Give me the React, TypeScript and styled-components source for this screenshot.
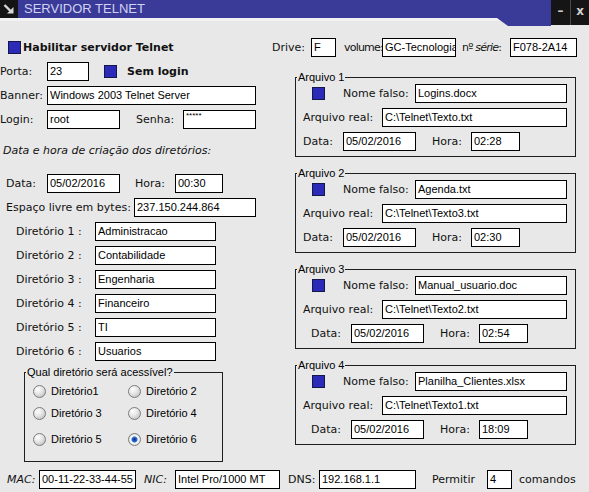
import styled, { createGlobalStyle } from 'styled-components';

const GlobalStyle = createGlobalStyle`
    body {
        margin: 0;
        background: #e8e8e8;
    }
`;

const files = [
    { n: 1, nome: 'Logins.docx', real: 'C:\\Telnet\\Texto.txt', hora: '02:28', shift: 0 },
    { n: 2, nome: 'Agenda.txt', real: 'C:\\Telnet\\Texto3.txt', hora: '02:30', shift: 0 },
    { n: 3, nome: 'Manual_usuario.doc', real: 'C:\\Telnet\\Texto2.txt', hora: '02:54', shift: 8 },
    { n: 4, nome: 'Planilha_Clientes.xlsx', real: 'C:\\Telnet\\Texto1.txt', hora: '18:09', shift: 8 },
];

const dirs = ['Administracao', 'Contabilidade', 'Engenharia', 'Financeiro', 'TI', 'Usuarios'];

const radios = ['Diretório1', 'Diretório 2', 'Diretório 3', 'Diretório 4', 'Diretório 5', 'Diretório 6'];

const App = () => {
    return (
        <Window>
            <GlobalStyle />
            <TitleBar>
                <SysBox>
                    <svg width="18" height="18" viewBox="0 0 18 18">
                        <path d="M4.5 5 L10.5 11" stroke="#d6d6d6" strokeWidth="2.4" />
                        <polygon points="13.5,7 13.5,13.5 7,13.5" fill="#d6d6d6" />
                    </svg>
                </SysBox>
                <Title>SERVIDOR TELNET</Title>
                <Notch />
                <WinButton>–</WinButton>
                <WinButton $sep>x</WinButton>
            </TitleBar>

            <Content>
                <Row $pl={8}>
                    <Check />
                    <Label $ml={2} $bold>Habilitar servidor Telnet</Label>
                    <Spacer />
                    <Label $w={39}>Drive:</Label>
                    <Field $w={25}>F</Field>
                    <Label $w={38} $ml={8} $tight>volume:</Label>
                    <Field $w={74}>GC-Tecnologia</Field>
                    <Label $w={48} $ml={6} $tight>nº <i>série</i>:</Label>
                    <Field $w={67}>F078-2A14</Field>
                    <Gap $w={12} />
                </Row>

                <Columns>
                    <LeftCol>
                        <Row>
                            <Label $w={47}>Porta:</Label>
                            <Field $w={42}>23</Field>
                            <Check $ml={15} />
                            <Label $ml={10} $bold>Sem login</Label>
                        </Row>
                        <Row $mt={5}>
                            <Label $w={47}>Banner:</Label>
                            <Field $w={209}>Windows 2003 Telnet Server</Field>
                        </Row>
                        <Row $mt={5}>
                            <Label $w={47}>Login:</Label>
                            <Field $w={73}>root</Field>
                            <Label $w={47} $ml={16}>Senha:</Label>
                            <Field $w={73} $mask>*****</Field>
                        </Row>

                        <Heading>Data e hora de criação dos diretórios:</Heading>

                        <Row $pl={6} $mt={15}>
                            <Label $w={41}>Data:</Label>
                            <Field $w={73}>05/02/2016</Field>
                            <Label $w={40} $ml={15}>Hora:</Label>
                            <Field $w={48}>00:30</Field>
                        </Row>
                        <Row $pl={6} $mt={5}>
                            <Label $w={128}>Espaço livre em bytes:</Label>
                            <Field $w={122}>237.150.244.864</Field>
                        </Row>
                        {dirs.map((d, i) => (
                            <Row key={d} $pl={16} $mt={5}>
                                <Label $w={79}>Diretório {i + 1} :</Label>
                                <Field $w={121}>{d}</Field>
                            </Row>
                        ))}

                        <DirGroup>
                            <Legend>Qual diretório será acessível?</Legend>
                            <RadioGrid>
                                {radios.map((r, i) => (
                                    <RadioItem key={r}>
                                        <RadioCircle $checked={i === 5} />
                                        {r}
                                    </RadioItem>
                                ))}
                            </RadioGrid>
                        </DirGroup>
                    </LeftCol>

                    <RightCol>
                        {files.map((f) => (
                            <FileGroup key={f.n} $mt={f.n === 1 ? 0 : 9}>
                                <Legend>Arquivo {f.n}</Legend>
                                <Row $pl={16}>
                                    <Check />
                                    <Label $w={72} $ml={18}>Nome falso:</Label>
                                    <Field $w={152}>{f.nome}</Field>
                                </Row>
                                <Row $pl={7} $mt={5}>
                                    <Label $w={79}>Arquivo real:</Label>
                                    <Field $w={185}>{f.real}</Field>
                                </Row>
                                <Row $pl={7 + f.shift} $mt={5}>
                                    <Label $w={40}>Data:</Label>
                                    <Field $w={73}>05/02/2016</Field>
                                    <Label $w={39} $ml={16}>Hora:</Label>
                                    <Field $w={49}>{f.hora}</Field>
                                </Row>
                            </FileGroup>
                        ))}
                    </RightCol>
                </Columns>

                <Row $pl={7} $mt={8}>
                    <Label $w={32} $italic>MAC:</Label>
                    <Field $w={97}>00-11-22-33-44-55</Field>
                    <Label $w={31} $ml={8} $italic>NIC:</Label>
                    <Field $w={105}>Intel Pro/1000 MT</Field>
                    <Label $w={31} $ml={8}>DNS:</Label>
                    <Field $w={97}>192.168.1.1</Field>
                    <Label $w={55} $ml={16}>Permitir</Label>
                    <Field $w={25}>4</Field>
                    <Label $ml={7}>comandos</Label>
                </Row>
            </Content>
        </Window>
    );
};

const Window = styled.div`
    width: 589px;
    height: 492px;
    background: #e8e8e8;
    display: flex;
    flex-direction: column;
    overflow: hidden;
`;

const TitleBar = styled.div`
    display: flex;
    align-items: flex-start;
    height: 18px;
    background: #3a3a98;
    box-shadow: 0 3px 0 #f1f1f1;
    position: relative;
    z-index: 1;
`;

const SysBox = styled.div`
    width: 18px;
    height: 18px;
    background: #141414;
    display: flex;
    align-items: center;
    justify-content: center;
    flex-shrink: 0;
`;

const Title = styled.div`
    flex: 1;
    margin-left: 6px;
    font-family: "Liberation Sans", Arial, sans-serif;
    font-size: 13px;
    line-height: 18px;
    color: #d2d2f4;
`;

const Notch = styled.div`
    width: 54px;
    height: 26px;
    background: #3a3a98;
    clip-path: polygon(0 0, 100% 0, 100% 100%, 11px 100%, 0 18px);
    flex-shrink: 0;
`;

const WinButton = styled.div<{ $sep?: boolean }>`
    width: 19px;
    height: 25px;
    box-sizing: border-box;
    background: #151515;
    color: #cfcfcf;
    display: flex;
    align-items: center;
    justify-content: center;
    font-family: "DejaVu Sans", sans-serif;
    font-size: 12px;
    font-weight: bold;
    padding-bottom: 4px;
    border-left: ${(p) => (p.$sep ? '1px solid #4a4a4a' : 'none')};
    flex-shrink: 0;
`;

const Content = styled.div`
    display: flex;
    flex-direction: column;
    padding-top: 20px;
`;

const Row = styled.div<{ $pl?: number; $mt?: number }>`
    display: flex;
    align-items: center;
    height: 19px;
    padding-left: ${(p) => p.$pl ?? 0}px;
    margin-top: ${(p) => p.$mt ?? 0}px;
`;

const Spacer = styled.div`
    flex: 1;
`;

const Gap = styled.div<{ $w: number }>`
    width: ${(p) => p.$w}px;
    flex-shrink: 0;
`;

const Label = styled.span<{ $w?: number; $ml?: number; $bold?: boolean; $italic?: boolean; $tight?: boolean }>`
    font-family: "DejaVu Sans", sans-serif;
    font-size: 11px;
    color: #111;
    white-space: nowrap;
    flex-shrink: 0;
    width: ${(p) => (p.$w ? `${p.$w}px` : 'auto')};
    margin-left: ${(p) => p.$ml ?? 0}px;
    font-weight: ${(p) => (p.$bold ? 'bold' : 'normal')};
    font-style: ${(p) => (p.$italic ? 'italic' : 'normal')};
    letter-spacing: ${(p) => (p.$tight ? '-0.8px' : 'normal')};
`;

const Field = styled.div<{ $w: number; $mask?: boolean }>`
    width: ${(p) => p.$w}px;
    height: 19px;
    box-sizing: border-box;
    flex-shrink: 0;
    border: 1px solid #000;
    background: #fff;
    padding: ${(p) => (p.$mask ? '1px 2px 0' : '0 2px')};
    font-family: "Liberation Sans", Arial, sans-serif;
    font-size: ${(p) => (p.$mask ? '8px' : '11px')};
    line-height: ${(p) => (p.$mask ? '8px' : '16px')};
    color: #000;
    white-space: nowrap;
    overflow: hidden;
`;

const Check = styled.div<{ $ml?: number }>`
    width: 13px;
    height: 13px;
    box-sizing: border-box;
    flex-shrink: 0;
    margin-left: ${(p) => p.$ml ?? 0}px;
    background: #2b2bb8;
    border: 1px solid #16164c;
`;

const Columns = styled.div`
    display: flex;
    align-items: flex-start;
    margin-top: 5px;
`;

const LeftCol = styled.div`
    width: 295px;
    display: flex;
    flex-direction: column;
`;

const RightCol = styled.div`
    width: 281px;
    display: flex;
    flex-direction: column;
    padding-top: 8px;
`;

const Heading = styled.div`
    margin-top: 14px;
    padding-left: 3px;
    font-family: "DejaVu Sans", sans-serif;
    font-size: 11px;
    font-style: italic;
    line-height: 16px;
    color: #111;
`;

const GroupBase = styled.fieldset`
    margin: 0;
    padding: 0;
    min-width: 0;
    box-sizing: border-box;
    border: 1px solid #1e1e1e;
`;

const FileGroup = styled(GroupBase)<{ $mt: number }>`
    margin-top: ${(p) => p.$mt}px;
    padding-bottom: 5px;
`;

const DirGroup = styled(GroupBase)`
    margin-top: 4px;
    margin-left: 24px;
    width: 199px;
`;

const Legend = styled.legend`
    margin-left: 1px;
    padding: 0 1px;
    font-family: "Liberation Sans", Arial, sans-serif;
    font-size: 11px;
    line-height: 14px;
    color: #000;
`;

const RadioGrid = styled.div`
    display: grid;
    grid-template-columns: 95px 1fr;
    grid-template-rows: 22px 26px 13px;
    padding: 6px 0 15px 8px;
`;

const RadioItem = styled.div`
    display: flex;
    align-items: flex-start;
    gap: 5px;
    font-family: "Liberation Sans", Arial, sans-serif;
    font-size: 11px;
    line-height: 13px;
    color: #000;
`;

const RadioCircle = styled.span<{ $checked?: boolean }>`
    width: 13px;
    height: 13px;
    box-sizing: border-box;
    border-radius: 50%;
    border: 1px solid #7c7c7c;
    background: ${(p) =>
        p.$checked
            ? 'radial-gradient(circle at 50% 50%, #0a2a80 0, #2d6fd6 2.5px, #ffffff 3.6px, #ececec 60%, #b8b8b8 100%)'
            : 'radial-gradient(circle at 35% 30%, #ffffff 0, #e4e4e4 45%, #b4b4b4 100%)'};
    flex-shrink: 0;
`;

export default App;
